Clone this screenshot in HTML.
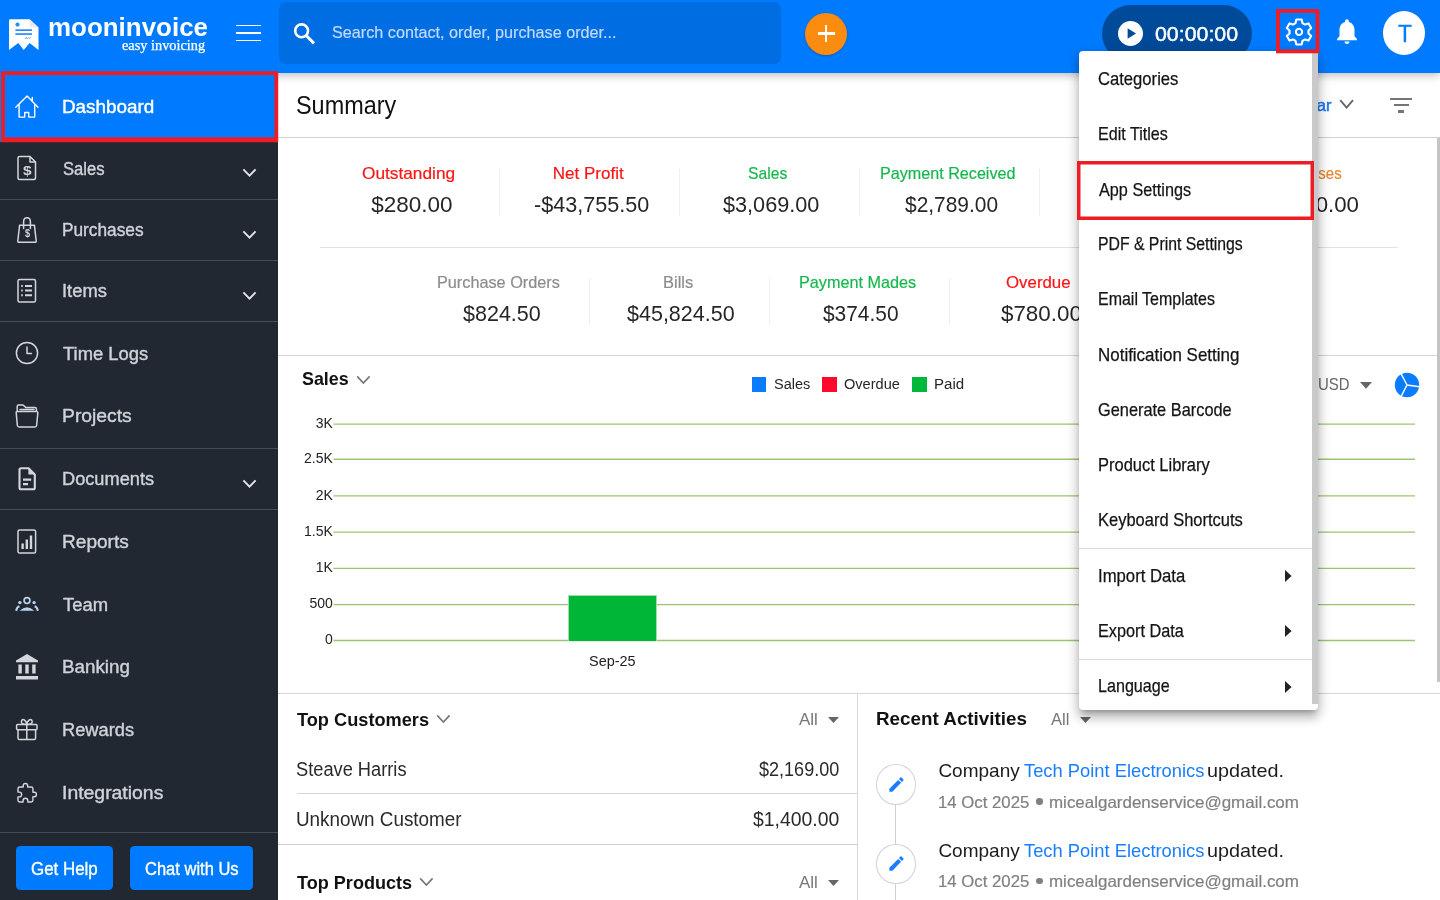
<!DOCTYPE html>
<html lang="en">
<head>
<meta charset="utf-8">
<title>Moon Invoice - Dashboard</title>
<style>
*{box-sizing:border-box;margin:0;padding:0}
html,body{width:1440px;height:900px;overflow:hidden;background:#fff;font-family:"Liberation Sans",sans-serif;color:#212121}
.t{position:absolute;white-space:nowrap;line-height:1}
.a{position:absolute}
svg{position:absolute;overflow:visible}
#header{position:absolute;left:0;top:0;width:1440px;height:73px;background:#007bff;box-shadow:0 2px 9px rgba(0,0,0,.28);z-index:5}
#sidebar{position:absolute;left:0;top:73px;width:278px;height:827px;background:#212832;z-index:4}
#main{position:absolute;left:0;top:0;width:1440px;height:900px;background:#fff;z-index:1}
#menu{position:absolute;z-index:9}
.hl{position:absolute;height:1px;background:#dcdcdc}
.vl{position:absolute;width:1px;background:#efefef}
.sep{position:absolute;left:0;width:278px;height:1px;background:#464d58}
.g{position:absolute;left:0;top:0;width:1440px;height:900px;will-change:transform}

</style>
</head>
<body>
<div class="g">
<div id="header">
<svg style="left:0;top:0" width="60" height="73" viewBox="0 0 60 73">
<path d="M10.2 19.2 H29.6 L38.5 27.6 V50 L29.6 43 L23.7 50 L18.3 43 L9 50 V20.4 Q9 19.2 10.2 19.2 Z" fill="#fff"/>
<path d="M29.6 19.2 L38.5 27.6 H31.2 Q29.6 27.6 29.6 26 Z" fill="#e9e9ee"/>
<circle cx="17.5" cy="24.6" r="2.1" fill="#2a8cff"/>
<rect x="15.4" y="29.3" width="16.6" height="1.7" fill="#2a8cff"/>
<rect x="15.4" y="33.2" width="16.6" height="1.7" fill="#2a8cff"/>
<path d="M25 39.2 l1.4 -2 l0.8 2 l1.2 -1.6 l1.4 0.6 l1.4 -1" stroke="#5aa6ff" stroke-width="0.8" fill="none"/>
</svg>
<span class="t" style="top:14.00px;font-size:26.5px;color:#fff;left:48.14px;transform:scaleX(0.9789);transform-origin:0 0;font-weight:bold;">mooninvoice</span>
<span class="t" style="top:39.00px;font-size:14px;color:#fff;left:122.29px;transform:scaleX(1.0236);transform-origin:0 0;font-family:'Liberation Serif',serif;-webkit-text-stroke:0.25px #fff;">easy invoicing</span>
<div class="a" style="left:236px;top:24.6px;width:25px;height:1.6px;background:#fff"></div>
<div class="a" style="left:236px;top:32.2px;width:25px;height:1.6px;background:#fff"></div>
<div class="a" style="left:236px;top:39.8px;width:25px;height:1.6px;background:#fff"></div>
<div class="a" style="left:278.5px;top:2px;width:502.5px;height:62px;border-radius:7px;background:#006de2"></div>
<svg style="left:290px;top:19px" width="28" height="28" viewBox="0 0 28 28">
<circle cx="11.6" cy="11.8" r="6.4" fill="none" stroke="#fff" stroke-width="2.6"/>
<path d="M16.4 16.8 L24 24.4" stroke="#fff" stroke-width="3" stroke-linecap="butt"/></svg>
<span class="t" style="top:24.00px;font-size:17px;color:#c0daf9;left:332.13px;transform:scaleX(0.9531);transform-origin:0 0;-webkit-text-stroke:0.2px #c0daf9;">Search contact, order, purchase order...</span>
<div class="a" style="left:805px;top:12.5px;width:42px;height:42px;border-radius:50%;background:#fb8c10;box-shadow:0 1px 3px rgba(0,0,0,.25)"></div>
<div class="a" style="left:817.5px;top:32.2px;width:17px;height:2.6px;background:#fff"></div>
<div class="a" style="left:824.7px;top:25px;width:2.6px;height:17px;background:#fff"></div>
<div class="a" style="left:1101.600px;top:5.200px;width:150px;height:57px;border-radius:28.5px;background:#004a9a"></div>
<div class="a" style="left:1118.2px;top:20.8px;width:25px;height:25px;border-radius:50%;background:#fff"></div>
<svg style="left:1118.2px;top:20.8px" width="25" height="25" viewBox="0 0 25 25"><path d="M9.6 7.2 L18 12.5 L9.6 17.8 Z" fill="#004a9a"/></svg>
<span class="t" style="top:24.00px;font-size:20px;color:#fff;left:1155.05px;transform:scaleX(1.0668);transform-origin:0 0;-webkit-text-stroke:0.45px #fff;">00:00:00</span>
<svg style="left:1285px;top:18px" width="28" height="28" viewBox="0 0 28 28">
<path d="M17.44 5.04 L16.66 1.48 L11.34 1.48 L10.56 5.04 L7.96 6.54 L4.49 5.44 L1.83 10.04 L4.52 12.50 L4.52 15.50 L1.83 17.96 L4.49 22.56 L7.96 21.46 L10.56 22.96 L11.34 26.52 L16.66 26.52 L17.44 22.96 L20.04 21.46 L23.51 22.56 L26.17 17.96 L23.48 15.50 L23.48 12.50 L26.17 10.04 L23.51 5.44 L20.04 6.54 Z" fill="none" stroke="#fff" stroke-width="2.1" stroke-linejoin="round"/>
<circle cx="14" cy="13.9" r="3.1" fill="none" stroke="#fff" stroke-width="2.1"/></svg>
<svg style="left:1332px;top:16.4px" width="30" height="30.500" viewBox="0 0 24 24" preserveAspectRatio="none">
<path fill="#fff" d="M12 22c1.100 0 2-.9 2-2h-4c0 1.100.89 2 2 2zm6-6v-5c0-3.070-1.640-5.640-4.500-6.320V4c0-.83-.67-1.500-1.500-1.500s-1.500.67-1.500 1.500v.68C7.630 5.360 6 7.920 6 11v5l-2 2v1h16v-1l-2-2z"/></svg>
<div class="a" style="left:1383px;top:11.200px;width:42px;height:44px;border-radius:50%;background:#fff"></div>
<span class="t" style="top:23.00px;font-size:23.3px;color:#0a7cff;left:1397.71px;transform:scaleX(0.9773);transform-origin:0 0;-webkit-text-stroke:0.3px #0a7cff;">T</span>
</div>
<div id="sidebar"></div>
<div class="a" id="sidecontent" style="left:0;top:0;width:278px;height:900px;z-index:6">
<div class="a" style="left:0;top:71px;width:278px;height:71.2px;background:#007bff"></div>
<svg style="left:0;top:0" width="280" height="150" viewBox="0 0 280 150"><path fill-rule="evenodd" fill="#ee1c25" d="M1.100 71.200 H278.200 V142.200 H1.100 Z M4.900 75.100 V137.300 H274.400 V75.100 Z"/></svg>
<span class="t" style="top:98.00px;font-size:18.7px;color:#fff;left:62.19px;transform:scaleX(1.0090);transform-origin:0 0;-webkit-text-stroke:0.4px #fff;">Dashboard</span>
<span class="t" style="top:160.00px;font-size:18.7px;color:#cfd3d8;left:62.99px;transform:scaleX(0.8874);transform-origin:0 0;-webkit-text-stroke:0.4px #cfd3d8;">Sales</span>
<svg style="left:242px;top:168.2px" width="15" height="10" viewBox="0 0 15 10"><path d="M1.4 1.4 L7.5 7.6 L13.6 1.4" fill="none" stroke="#e3e5e8" stroke-width="1.9"/></svg>
<span class="t" style="top:221.00px;font-size:18.7px;color:#cfd3d8;left:62.31px;transform:scaleX(0.9234);transform-origin:0 0;-webkit-text-stroke:0.4px #cfd3d8;">Purchases</span>
<svg style="left:242px;top:230.2px" width="15" height="10" viewBox="0 0 15 10"><path d="M1.4 1.4 L7.5 7.6 L13.6 1.4" fill="none" stroke="#e3e5e8" stroke-width="1.9"/></svg>
<span class="t" style="top:282.00px;font-size:18.7px;color:#cfd3d8;left:62.03px;transform:scaleX(0.9816);transform-origin:0 0;-webkit-text-stroke:0.4px #cfd3d8;">Items</span>
<svg style="left:242px;top:291.2px" width="15" height="10" viewBox="0 0 15 10"><path d="M1.4 1.4 L7.5 7.6 L13.6 1.4" fill="none" stroke="#e3e5e8" stroke-width="1.9"/></svg>
<span class="t" style="top:345.00px;font-size:18.7px;color:#cfd3d8;left:63.31px;transform:scaleX(0.9836);transform-origin:0 0;-webkit-text-stroke:0.4px #cfd3d8;">Time Logs</span>
<span class="t" style="top:407.00px;font-size:18.7px;color:#cfd3d8;left:62.15px;transform:scaleX(1.0336);transform-origin:0 0;-webkit-text-stroke:0.4px #cfd3d8;">Projects</span>
<span class="t" style="top:470.00px;font-size:18.7px;color:#cfd3d8;left:62.24px;transform:scaleX(0.9740);transform-origin:0 0;-webkit-text-stroke:0.4px #cfd3d8;">Documents</span>
<svg style="left:242px;top:479.2px" width="15" height="10" viewBox="0 0 15 10"><path d="M1.4 1.4 L7.5 7.6 L13.6 1.4" fill="none" stroke="#e3e5e8" stroke-width="1.9"/></svg>
<span class="t" style="top:533.00px;font-size:18.7px;color:#cfd3d8;left:62.17px;transform:scaleX(1.0205);transform-origin:0 0;-webkit-text-stroke:0.4px #cfd3d8;">Reports</span>
<span class="t" style="top:596.00px;font-size:18.7px;color:#cfd3d8;left:63.31px;transform:scaleX(0.9864);transform-origin:0 0;-webkit-text-stroke:0.4px #cfd3d8;">Team</span>
<span class="t" style="top:658.00px;font-size:18.7px;color:#cfd3d8;left:62.19px;transform:scaleX(1.0046);transform-origin:0 0;-webkit-text-stroke:0.4px #cfd3d8;">Banking</span>
<span class="t" style="top:721.00px;font-size:18.7px;color:#cfd3d8;left:62.23px;transform:scaleX(0.9777);transform-origin:0 0;-webkit-text-stroke:0.4px #cfd3d8;">Rewards</span>
<span class="t" style="top:784.00px;font-size:18.7px;color:#cfd3d8;left:61.94px;transform:scaleX(1.0377);transform-origin:0 0;-webkit-text-stroke:0.4px #cfd3d8;">Integrations</span>
<div class="sep" style="top:199.0px"></div>
<div class="sep" style="top:260.0px"></div>
<div class="sep" style="top:321.0px"></div>
<div class="sep" style="top:448.0px"></div>
<div class="sep" style="top:509.0px"></div>
<div class="sep" style="top:832.0px"></div>
<svg style="left:0;top:0" width="60" height="130" viewBox="0 0 60 130"><path d="M15.800 107.300 L27.100 96 L38 107.300 M19.100 104.600 V117.100 H24.700 V112.500 H28.700 V117.100 H34.700 V104.600 M32.300 97.400 V101.200" fill="none" stroke="#fff" stroke-width="1.400" stroke-linecap="round" stroke-linejoin="round"/></svg>
<svg style="left:16px;top:155px" width="22" height="26" viewBox="0 0 22 26"><path d="M3.5 1.5 H14 L19.5 7 V23 Q19.5 24.5 18 24.5 H3.5 Q2 24.5 2 23 V3 Q2 1.5 3.5 1.5 Z M14 1.5 V7 H19.5" fill="none" stroke="#d3d6da" stroke-width="1.5" stroke-linejoin="round" stroke-linecap="round"/></svg><span class="t" style="top:164.00px;font-size:13.5px;color:#d3d6da;left:22.78px;transform:scaleX(1.1507);transform-origin:0 0;font-weight:bold;">$</span>
<svg style="left:15px;top:216px" width="24" height="28" viewBox="0 0 24 28"><path d="M4.600 9.200 H19.400 L21.200 25 Q21.300 26.300 20 26.300 H4 Q2.700 26.300 2.800 25 Z M8.600 12.400 V6 Q8.600 1.800 12 1.800 Q15.400 1.800 15.400 6 V12.400" fill="none" stroke="#d3d6da" stroke-width="1.5" stroke-linejoin="round" stroke-linecap="round"/></svg><span class="t" style="top:228.00px;font-size:10.5px;color:#d3d6da;left:24.61px;transform:scaleX(0.8750);transform-origin:0 0;font-weight:bold;">$</span>
<svg style="left:16px;top:278px" width="22" height="26" viewBox="0 0 22 26"><rect x="2" y="1.5" width="17.5" height="22.5" rx="1.6" fill="none" stroke="#d3d6da" stroke-width="1.5" stroke-linejoin="round" stroke-linecap="round"/><path d="M5.2 8 H6.8 M9 8 H16 M5.2 12.6 H6.8 M9 12.6 H16 M5.2 17.2 H6.8 M9 17.2 H16" fill="none" stroke="#d3d6da" stroke-width="2"/></svg>
<svg style="left:14px;top:340px" width="26" height="26" viewBox="0 0 26 26"><circle cx="13" cy="13" r="10.6" fill="none" stroke="#d3d6da" stroke-width="1.5" stroke-linejoin="round" stroke-linecap="round"/><path d="M13 7 V13.4 H17.4" fill="none" stroke="#d3d6da" stroke-width="1.5" stroke-linejoin="round" stroke-linecap="round"/></svg>
<svg style="left:14px;top:402px" width="26" height="28" viewBox="0 0 26 28"><path d="M3 9.5 H22.5 Q24 9.5 23.8 11 L22.6 23.5 Q22.4 25 21 25 H5 Q3.6 25 3.4 23.5 L2.2 11 Q2 9.5 3 9.5 Z M3.2 9 V4.5 Q3.2 3 4.6 3 H9 L12 5.6 H21 Q22.4 5.6 22.4 7 V9 M6 7.6 H20" fill="none" stroke="#d3d6da" stroke-width="1.5" stroke-linejoin="round" stroke-linecap="round"/></svg>
<svg style="left:16px;top:466px" width="22" height="26" viewBox="0 0 22 26"><path d="M5 2.200 H12.600 L18.800 8.400 V21.800 Q18.800 23.300 17.300 23.300 H5 Q3.500 23.300 3.500 21.800 V3.700 Q3.500 2.200 5 2.200 Z" fill="none" stroke="#d3d6da" stroke-width="2.100" stroke-linejoin="round"/><path d="M12.400 2.400 L18.600 8.600 H12.400 Z" fill="#d3d6da"/><path d="M7 13.700 H15.200 M7 18.200 H12" stroke="#d3d6da" stroke-width="2.200" fill="none"/></svg>
<svg style="left:16px;top:528px" width="22" height="27" viewBox="0 0 22 27"><rect x="2" y="2" width="17.6" height="23" rx="1.6" fill="none" stroke="#d3d6da" stroke-width="1.5" stroke-linejoin="round" stroke-linecap="round"/><path d="M6.6 21 V15.5 M10.8 21 V11.5 M15 21 V7.5" stroke="#d3d6da" stroke-width="2.4" fill="none"/></svg>
<svg style="left:15px;top:595px" width="24" height="18" viewBox="0 0 24 18"><circle cx="12" cy="5.6" r="2.9" fill="none" stroke="#b9d2ee" stroke-width="1.7"/><path d="M4.6 15.8 Q12 8.6 19.4 15.8 Z" fill="#b9d2ee"/><circle cx="4.9" cy="7.6" r="1.7" fill="#b9d2ee"/><circle cx="19.1" cy="7.6" r="1.7" fill="#b9d2ee"/><path d="M1.2 15.8 Q1.6 12.2 4.4 11.2 M22.8 15.8 Q22.4 12.2 19.6 11.2" stroke="#b9d2ee" stroke-width="2" fill="none"/></svg>
<svg style="left:15px;top:653px" width="24" height="28" viewBox="0 0 24 28"><path d="M12 1 L23 7.4 V9.2 H1 V7.4 Z M3.4 11.5 H6.8 V20.5 H3.4 Z M10.3 11.5 H13.7 V20.5 H10.3 Z M17.2 11.5 H20.6 V20.5 H17.2 Z M1 23 H23 V26.6 H1 Z" fill="#d3d6da"/></svg>
<svg style="left:14px;top:717px" width="26" height="25" viewBox="0 0 26 25"><rect x="2.6" y="7.6" width="20.4" height="5.2" rx="1" fill="none" stroke="#d3d6da" stroke-width="1.5" stroke-linejoin="round" stroke-linecap="round"/><path d="M4 12.8 V21 Q4 22.6 5.4 22.6 H20.2 Q21.6 22.6 21.6 21 V12.8 M12.8 7.6 V22.6 M12.8 7.4 Q7 7.6 7.4 4.4 Q8 1.8 10.4 3 Q12.4 4.2 12.8 7.4 Q13.2 4.2 15.2 3 Q17.600 1.8 18.2 4.4 Q18.6 7.6 12.8 7.4" fill="none" stroke="#d3d6da" stroke-width="1.5" stroke-linejoin="round" stroke-linecap="round"/></svg>
<svg style="left:14.5px;top:780.5px" width="24" height="24" viewBox="0 0 24 24"><path fill="none" stroke="#d3d6da" stroke-width="1.6" stroke-linejoin="round" d="M20.5 11H19V7c0-1.100-.9-2-2-2h-4V3.500C13 2.120 11.880 1 10.500 1S8 2.120 8 3.500V5H4c-1.100 0-1.990.9-1.990 2v3.800H3.500c1.490 0 2.700 1.210 2.700 2.700s-1.210 2.700-2.700 2.700H2V20c0 1.100.9 2 2 2h3.800v-1.500c0-1.490 1.210-2.700 2.700-2.700 1.490 0 2.700 1.210 2.700 2.700V22H17c1.100 0 2-.9 2-2v-4h1.500c1.380 0 2.500-1.120 2.500-2.500S21.880 11 20.500 11z" transform="translate(1.2 1.600) scale(0.88)"/></svg>
<div class="a" style="left:16px;top:845.6px;width:97px;height:44px;border-radius:4.5px;background:#007bff"></div>
<div class="a" style="left:130px;top:845.6px;width:122.6px;height:44px;border-radius:4.5px;background:#007bff"></div>
<span class="t" style="top:860.00px;font-size:18px;color:#fff;left:31.25px;transform:scaleX(0.9395);transform-origin:0 0;-webkit-text-stroke:0.35px #fff;">Get Help</span>
<span class="t" style="top:860.00px;font-size:18px;color:#fff;left:144.67px;transform:scaleX(0.9174);transform-origin:0 0;-webkit-text-stroke:0.35px #fff;">Chat with Us</span>
</div>
<div id="main">
<span class="t" style="top:93.00px;font-size:25px;color:#111;left:295.67px;transform:scaleX(0.9367);transform-origin:0 0;">Summary</span>
<span class="t" style="top:97.00px;font-size:16.5px;color:#1877f2;left:1262.00px;transform:scaleX(1.0102);transform-origin:0 0;-webkit-text-stroke:0.45px #1877f2;">This Year</span>
<svg style="left:1339px;top:99px" width="16" height="11" viewBox="0 0 16 11"><path d="M1.2 1.2 L7.6 8.6 L14 1.2" fill="none" stroke="#666" stroke-width="1.9"/></svg>
<div class="a" style="left:1390px;top:97.5px;width:22px;height:2.2px;background:#757575"></div>
<div class="a" style="left:1393.6px;top:104px;width:15px;height:2.2px;background:#757575"></div>
<div class="a" style="left:1398.4px;top:110.4px;width:5.4px;height:2.2px;background:#757575"></div>
<div class="hl" style="left:278px;top:137px;width:1162px;background:#d0d0d0"></div>
<span class="t" style="top:165.00px;font-size:17px;color:#fa1616;left:362.49px;transform:scaleX(1.0156);transform-origin:0 0;-webkit-text-stroke:0.2px #fa1616;">Outstanding</span>
<span class="t" style="top:194.00px;font-size:22.5px;color:#262626;left:371.30px;">$280.00</span>
<span class="t" style="top:165.00px;font-size:17px;color:#fa1616;left:552.80px;-webkit-text-stroke:0.2px #fa1616;">Net Profit</span>
<span class="t" style="top:194.00px;font-size:22.5px;color:#262626;left:533.84px;transform:scaleX(0.9594);transform-origin:0 0;">-$43,755.50</span>
<span class="t" style="top:165.00px;font-size:17px;color:#16b84e;left:748.45px;transform:scaleX(0.9223);transform-origin:0 0;-webkit-text-stroke:0.2px #16b84e;">Sales</span>
<span class="t" style="top:194.00px;font-size:22.5px;color:#262626;left:723.11px;transform:scaleX(0.9627);transform-origin:0 0;">$3,069.00</span>
<span class="t" style="top:165.00px;font-size:17px;color:#16b84e;left:880.07px;transform:scaleX(0.9494);transform-origin:0 0;-webkit-text-stroke:0.2px #16b84e;">Payment Received</span>
<span class="t" style="top:194.00px;font-size:22.5px;color:#262626;left:904.61px;transform:scaleX(0.9294);transform-origin:0 0;">$2,789.00</span>
<span class="t" style="top:165.00px;font-size:17px;color:#8c8c8c;left:1094.08px;transform:scaleX(0.9354);transform-origin:0 0;-webkit-text-stroke:0.2px #8c8c8c;">Estimates</span>
<span class="t" style="top:194.00px;font-size:22.5px;color:#262626;left:1081.11px;transform:scaleX(0.9687);transform-origin:0 0;">$4,530.00</span>
<span class="t" style="top:165.00px;font-size:17px;color:#e8862e;left:1276.16px;transform:scaleX(0.8791);transform-origin:0 0;-webkit-text-stroke:0.2px #e8862e;">Expenses</span>
<span class="t" style="top:194.00px;font-size:22.5px;color:#262626;left:1260.10px;transform:scaleX(0.9889);transform-origin:0 0;">$1,850.00</span>
<div class="vl" style="left:499px;top:169px;height:47px"></div>
<div class="vl" style="left:679px;top:169px;height:47px"></div>
<div class="vl" style="left:859px;top:169px;height:47px"></div>
<div class="vl" style="left:1039px;top:169px;height:47px"></div>
<div class="vl" style="left:1219px;top:169px;height:47px"></div>
<div class="hl" style="left:319.6px;top:246.5px;width:1078px;background:#e2e2e2"></div>
<span class="t" style="top:274.00px;font-size:17px;color:#8c8c8c;left:437.06px;transform:scaleX(0.9558);transform-origin:0 0;-webkit-text-stroke:0.2px #8c8c8c;">Purchase Orders</span>
<span class="t" style="top:303.00px;font-size:22.5px;color:#262626;left:463.11px;transform:scaleX(0.9564);transform-origin:0 0;">$824.50</span>
<span class="t" style="top:274.00px;font-size:17px;color:#8c8c8c;left:663.04px;transform:scaleX(0.9693);transform-origin:0 0;-webkit-text-stroke:0.2px #8c8c8c;">Bills</span>
<span class="t" style="top:303.00px;font-size:22.5px;color:#262626;left:627.41px;transform:scaleX(0.9561);transform-origin:0 0;">$45,824.50</span>
<span class="t" style="top:274.00px;font-size:17px;color:#16b84e;left:799.26px;transform:scaleX(0.9529);transform-origin:0 0;-webkit-text-stroke:0.2px #16b84e;">Payment Mades</span>
<span class="t" style="top:303.00px;font-size:22.5px;color:#262626;left:823.31px;transform:scaleX(0.9290);transform-origin:0 0;">$374.50</span>
<span class="t" style="top:274.00px;font-size:17px;color:#fa1616;left:1005.51px;transform:scaleX(0.9906);transform-origin:0 0;-webkit-text-stroke:0.2px #fa1616;">Overdue</span>
<span class="t" style="top:303.00px;font-size:22.5px;color:#262626;left:1000.70px;transform:scaleX(0.9938);transform-origin:0 0;">$780.00</span>
<span class="t" style="top:274.00px;font-size:17px;color:#fa1616;left:1193.04px;transform:scaleX(0.9709);transform-origin:0 0;-webkit-text-stroke:0.2px #fa1616;">Unpaid</span>
<span class="t" style="top:303.00px;font-size:22.5px;color:#262626;left:1171.11px;transform:scaleX(0.9687);transform-origin:0 0;">$1,060.00</span>
<div class="vl" style="left:589px;top:277.5px;height:47px"></div>
<div class="vl" style="left:769px;top:277.5px;height:47px"></div>
<div class="vl" style="left:949px;top:277.5px;height:47px"></div>
<div class="vl" style="left:1129px;top:277.5px;height:47px"></div>
<div class="hl" style="left:278px;top:355.4px;width:1162px;background:#d6d6d6"></div>
<span class="t" style="top:370.00px;font-size:18.6px;color:#111;left:302.32px;transform:scaleX(0.9599);transform-origin:0 0;font-weight:bold;">Sales</span>
<svg style="left:355.5px;top:374.5px" width="16" height="11" viewBox="0 0 16 11"><path d="M1.2 1.4 L7.4 8 L13.6 1.400" fill="none" stroke="#777" stroke-width="1.7"/></svg>
<div class="a" style="left:751.7px;top:377.4px;width:14.8px;height:14.6px;background:#0a7cff"></div>
<div class="a" style="left:822.4px;top:377.4px;width:14.8px;height:14.6px;background:#ff0a2d"></div>
<div class="a" style="left:912.0px;top:377.4px;width:14.8px;height:14.6px;background:#00b83a"></div>
<span class="t" style="top:377.00px;font-size:14px;color:#262626;left:773.98px;transform:scaleX(1.0383);transform-origin:0 0;">Sales</span>
<span class="t" style="top:377.00px;font-size:14px;color:#262626;left:844.38px;transform:scaleX(1.0400);transform-origin:0 0;">Overdue</span>
<span class="t" style="top:377.00px;font-size:14px;color:#262626;left:934.12px;transform:scaleX(1.0769);transform-origin:0 0;">Paid</span>
<span class="t" style="top:376.00px;font-size:16.5px;color:#666;left:1318.01px;transform:scaleX(0.9058);transform-origin:0 0;">USD</span>
<svg style="left:1360px;top:381.500px" width="12" height="7" viewBox="0 0 12 7"><path d="M0 0 H12 L6 6.800 Z" fill="#666"/></svg>
<svg style="left:1394px;top:371.500px" width="26" height="26" viewBox="0 0 26 26"><circle cx="13" cy="13" r="12.2" fill="#0a7cff"/><path d="M13 13 L7 1.600 M13 13 L25.400 14.800 M13 13 L7 24.600" stroke="#fff" stroke-width="1.400" fill="none"/></svg>
<span class="t" style="right:1107.2px;top:415.75px;font-size:14px;color:#222">3K</span>
<span class="t" style="right:1107.2px;top:450.95px;font-size:14px;color:#222">2.5K</span>
<span class="t" style="right:1107.2px;top:487.55px;font-size:14px;color:#222">2K</span>
<span class="t" style="right:1107.2px;top:523.75px;font-size:14px;color:#222">1.5K</span>
<span class="t" style="right:1107.2px;top:560.05px;font-size:14px;color:#222">1K</span>
<span class="t" style="right:1107.2px;top:596.25px;font-size:14px;color:#222">500</span>
<span class="t" style="right:1107.2px;top:632.15px;font-size:14px;color:#222">0</span>
<svg style="left:0;top:0" width="1440" height="700" viewBox="0 0 1440 700"><path d="M333.500 424.1 H1415" stroke="#9dc670" stroke-width="1.400" fill="none"/><path d="M333.500 459.3 H1415" stroke="#9dc670" stroke-width="1.400" fill="none"/><path d="M333.500 495.9 H1415" stroke="#9dc670" stroke-width="1.400" fill="none"/><path d="M333.500 532.1 H1415" stroke="#9dc670" stroke-width="1.400" fill="none"/><path d="M333.500 568.4 H1415" stroke="#9dc670" stroke-width="1.400" fill="none"/><path d="M333.500 604.6 H1415" stroke="#9dc670" stroke-width="1.400" fill="none"/><path d="M333.500 640.5 H1415" stroke="#9dc670" stroke-width="1.400" fill="none"/></svg>
<div class="a" style="left:567.6px;top:594.6px;width:89.4px;height:46px;background:#00b636;border:1px solid #9fe0a8;border-bottom:none"></div>
<span class="t" style="top:654.00px;font-size:14px;color:#222;left:589.28px;transform:scaleX(1.0318);transform-origin:0 0;">Sep-25</span>
<div class="hl" style="left:278px;top:692.8px;width:1162px;background:#d6d6d6"></div>
<div class="vl" style="left:857px;top:693px;height:207px;background:#d9d9d9"></div>
<span class="t" style="top:711.00px;font-size:18.6px;color:#111;left:296.90px;transform:scaleX(0.9784);transform-origin:0 0;font-weight:bold;">Top Customers</span>
<svg style="left:435.5px;top:713.500px" width="16" height="11" viewBox="0 0 16 11"><path d="M1.2 1.4 L7.4 8 L13.6 1.400" fill="none" stroke="#777" stroke-width="1.7"/></svg>
<span class="t" style="top:711.00px;font-size:16.5px;color:#777;left:799.30px;transform:scaleX(1.0289);transform-origin:0 0;">All</span>
<svg style="left:827.600px;top:716.500px" width="11" height="6" viewBox="0 0 11 6"><path d="M0 0 H11 L5.500 6 Z" fill="#666"/></svg>
<span class="t" style="top:760.00px;font-size:19.5px;color:#2a2a2a;left:296.35px;transform:scaleX(0.9357);transform-origin:0 0;">Steave Harris</span>
<span class="t" style="top:760.00px;font-size:19.5px;color:#2a2a2a;left:759.11px;transform:scaleX(0.9254);transform-origin:0 0;">$2,169.00</span>
<div class="hl" style="left:296.6px;top:793.2px;width:560.4px;background:#d6d6d6"></div>
<span class="t" style="top:810.00px;font-size:19.5px;color:#2a2a2a;left:295.65px;transform:scaleX(0.9669);transform-origin:0 0;">Unknown Customer</span>
<span class="t" style="top:810.00px;font-size:19.5px;color:#2a2a2a;left:753.10px;transform:scaleX(0.9953);transform-origin:0 0;">$1,400.00</span>
<div class="hl" style="left:278px;top:844.4px;width:579px;background:#d0d0d0"></div>
<span class="t" style="top:874.00px;font-size:18.6px;color:#111;left:296.91px;transform:scaleX(0.9719);transform-origin:0 0;font-weight:bold;">Top Products</span>
<svg style="left:419px;top:876.500px" width="16" height="11" viewBox="0 0 16 11"><path d="M1.2 1.4 L7.4 8 L13.6 1.400" fill="none" stroke="#777" stroke-width="1.7"/></svg>
<span class="t" style="top:874.00px;font-size:16.5px;color:#777;left:799.30px;transform:scaleX(1.0289);transform-origin:0 0;">All</span>
<svg style="left:827.600px;top:879.500px" width="11" height="6" viewBox="0 0 11 6"><path d="M0 0 H11 L5.500 6 Z" fill="#666"/></svg>
<span class="t" style="top:710.00px;font-size:18.6px;color:#111;left:875.89px;transform:scaleX(1.0122);transform-origin:0 0;font-weight:bold;">Recent Activities</span>
<span class="t" style="top:711.00px;font-size:16.5px;color:#777;left:1051.30px;transform:scaleX(1.0058);transform-origin:0 0;">All</span>
<svg style="left:1079.600px;top:716.500px" width="11" height="6" viewBox="0 0 11 6"><path d="M0 0 H11 L5.500 6 Z" fill="#666"/></svg>
<div class="vl" style="left:894.600px;top:800px;height:100px;background:#cfcfcf"></div>
<div class="a" style="left:876.0px;top:764.0px;width:39.500px;height:40.500px;border-radius:50%;background:#fff;border:1px solid #d2d2d2"></div>
<svg style="left:886.6px;top:774.6px" width="19" height="19" viewBox="0 0 24 24"><path fill="#1a7dff" d="M3 17.250V21h3.750L17.810 9.940l-3.750-3.750L3 17.250zM20.710 7.040c.39-.39.39-1.020 0-1.410l-2.340-2.340c-.39-.39-1.020-.39-1.410 0l-1.830 1.830 3.750 3.750 1.830-1.830z"/></svg>
<span class="t" style="top:761.00px;font-size:19px;color:#1c1c1c;left:938.40px;">Company</span>
<span class="t" style="top:761.00px;font-size:19px;color:#1a7dff;left:1023.91px;transform:scaleX(0.9650);transform-origin:0 0;">Tech Point Electronics</span>
<span class="t" style="top:761.00px;font-size:19px;color:#1c1c1c;left:1207.45px;transform:scaleX(1.0408);transform-origin:0 0;">updated.</span>
<span class="t" style="top:794.00px;font-size:16.5px;color:#808080;left:938.08px;transform:scaleX(1.0159);transform-origin:0 0;-webkit-text-stroke:0.2px #808080;">14 Oct 2025</span>
<div class="a" style="left:1036px;top:798.4px;width:6.6px;height:6.6px;border-radius:50%;background:#808080"></div>
<span class="t" style="top:794.00px;font-size:16.5px;color:#808080;left:1049.27px;transform:scaleX(1.0274);transform-origin:0 0;-webkit-text-stroke:0.2px #808080;">micealgardenservice@gmail.com</span>
<div class="a" style="left:876.0px;top:843.8px;width:39.500px;height:40.500px;border-radius:50%;background:#fff;border:1px solid #d2d2d2"></div>
<svg style="left:886.6px;top:854.3px" width="19" height="19" viewBox="0 0 24 24"><path fill="#1a7dff" d="M3 17.250V21h3.750L17.810 9.940l-3.750-3.750L3 17.250zM20.710 7.040c.39-.39.39-1.020 0-1.410l-2.340-2.340c-.39-.39-1.020-.39-1.410 0l-1.830 1.830 3.750 3.750 1.830-1.830z"/></svg>
<span class="t" style="top:841.00px;font-size:19px;color:#1c1c1c;left:938.40px;">Company</span>
<span class="t" style="top:841.00px;font-size:19px;color:#1a7dff;left:1023.91px;transform:scaleX(0.9650);transform-origin:0 0;">Tech Point Electronics</span>
<span class="t" style="top:841.00px;font-size:19px;color:#1c1c1c;left:1207.45px;transform:scaleX(1.0408);transform-origin:0 0;">updated.</span>
<span class="t" style="top:873.00px;font-size:16.5px;color:#808080;left:938.08px;transform:scaleX(1.0159);transform-origin:0 0;-webkit-text-stroke:0.2px #808080;">14 Oct 2025</span>
<div class="a" style="left:1036px;top:877.6px;width:6.6px;height:6.6px;border-radius:50%;background:#808080"></div>
<span class="t" style="top:873.00px;font-size:16.5px;color:#808080;left:1049.27px;transform:scaleX(1.0274);transform-origin:0 0;-webkit-text-stroke:0.2px #808080;">micealgardenservice@gmail.com</span>
<div class="a" style="left:1437px;top:138px;width:3px;height:544px;background:#c4c4c4"></div>
</div>
<div id="menu" class="a" style="left:0;top:0;width:1440px;height:900px;z-index:9">
<div class="a" style="left:1079px;top:51.200px;width:239px;height:658.800px;border-radius:4px;background:#fff;box-shadow:0 5px 5px -3px rgba(0,0,0,.24),0 8px 10px 1px rgba(0,0,0,.16),0 3px 14px 2px rgba(0,0,0,.14);overflow:hidden"><div class="a" style="right:0;top:0;width:6px;height:652.5px;background:#c9c9c9"></div></div>
<span class="t" style="top:71.00px;font-size:17.8px;color:#141414;left:1098.36px;transform:scaleX(0.9350);transform-origin:0 0;-webkit-text-stroke:0.25px #141414;">Categories</span>
<span class="t" style="top:126.00px;font-size:17.8px;color:#141414;left:1097.93px;transform:scaleX(0.9056);transform-origin:0 0;-webkit-text-stroke:0.25px #141414;">Edit Titles</span>
<span class="t" style="top:182.00px;font-size:17.8px;color:#141414;left:1099.20px;transform:scaleX(0.9133);transform-origin:0 0;-webkit-text-stroke:0.25px #141414;">App Settings</span>
<span class="t" style="top:236.00px;font-size:17.8px;color:#141414;left:1097.96px;transform:scaleX(0.8877);transform-origin:0 0;-webkit-text-stroke:0.25px #141414;">PDF &amp; Print Settings</span>
<span class="t" style="top:291.00px;font-size:17.8px;color:#141414;left:1097.94px;transform:scaleX(0.8987);transform-origin:0 0;-webkit-text-stroke:0.25px #141414;">Email Templates</span>
<span class="t" style="top:347.00px;font-size:17.8px;color:#141414;left:1097.87px;transform:scaleX(0.9534);transform-origin:0 0;-webkit-text-stroke:0.25px #141414;">Notification Setting</span>
<span class="t" style="top:402.00px;font-size:17.8px;color:#141414;left:1098.46px;transform:scaleX(0.9201);transform-origin:0 0;-webkit-text-stroke:0.25px #141414;">Generate Barcode</span>
<span class="t" style="top:457.00px;font-size:17.8px;color:#141414;left:1097.90px;transform:scaleX(0.9262);transform-origin:0 0;-webkit-text-stroke:0.25px #141414;">Product Library</span>
<span class="t" style="top:512.00px;font-size:17.8px;color:#141414;left:1097.90px;transform:scaleX(0.9274);transform-origin:0 0;-webkit-text-stroke:0.25px #141414;">Keyboard Shortcuts</span>
<span class="t" style="top:568.00px;font-size:17.8px;color:#141414;left:1097.70px;transform:scaleX(0.9398);transform-origin:0 0;-webkit-text-stroke:0.25px #141414;">Import Data</span>
<span class="t" style="top:623.00px;font-size:17.8px;color:#141414;left:1097.92px;transform:scaleX(0.9136);transform-origin:0 0;-webkit-text-stroke:0.25px #141414;">Export Data</span>
<span class="t" style="top:678.00px;font-size:17.8px;color:#141414;left:1097.93px;transform:scaleX(0.9066);transform-origin:0 0;-webkit-text-stroke:0.25px #141414;">Language</span>
<div class="hl" style="left:1079px;top:547.8px;width:233px;height:1.2px;background:#dadada"></div>
<div class="hl" style="left:1079px;top:658.9px;width:233px;height:1.2px;background:#dadada"></div>
<svg style="left:1285.2px;top:570.0px" width="7" height="12" viewBox="0 0 7 12"><path d="M0 0 L6.600 6 L0 12 Z" fill="#222"/></svg>
<svg style="left:1285.2px;top:624.6px" width="7" height="12" viewBox="0 0 7 12"><path d="M0 0 L6.600 6 L0 12 Z" fill="#222"/></svg>
<svg style="left:1285.2px;top:680.6px" width="7" height="12" viewBox="0 0 7 12"><path d="M0 0 L6.600 6 L0 12 Z" fill="#222"/></svg>
<div class="a" style="left:1076.8px;top:161px;width:237.2px;height:59.2px;box-shadow:inset 0 0 0 3.5px #ee1c25"></div>
<svg style="left:1276.2px;top:9.2px" width="43.4" height="44.3" viewBox="0 0 43.4 44.3"><rect x="1.9" y="1.9" width="39.6" height="40.5" fill="none" stroke="#ee1c25" stroke-width="3.8"/></svg>
</div>
</div>
</body>
</html>
